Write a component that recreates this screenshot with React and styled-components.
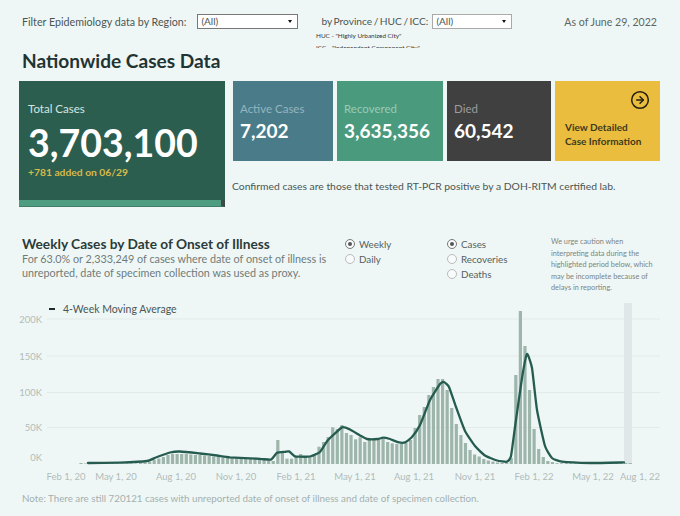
import React from "react";
import styled, { createGlobalStyle } from "styled-components";
import { CircleArrowRight } from "lucide-react";

const GlobalStyle = createGlobalStyle`
  html, body {
    margin: 0;
    background: #eff7f6;
    font-family: Lato, "Noto Sans", sans-serif;
  }
`;

const Page = styled.div`
  width: 680px;
  height: 516px;
  overflow: hidden;
  background: #eff7f6;
  color: #4a5654;
`;

// filters
const FilterBar = styled.div`
  height: 50px;
  padding: 14px 22px 0;
  box-sizing: border-box;
  display: flex;
  align-items: flex-start;
  font-size: 10.7px;
`;
const FilterLabel = styled.span`
  line-height: 15px;
  white-space: nowrap;
  margin-left: ${p => p.offset || 0}px;
  font-size: ${p => (p.tight ? "10.2px" : "inherit")};
  word-spacing: ${p => (p.tight ? "-1.1px" : "0")};
`;
const Select = styled.div`
  width: ${p => p.w}px;
  height: 15px;
  margin-left: ${p => p.gap}px;
  box-sizing: border-box;
  background: #fff;
  border: 1px solid ${p => p.border};
  padding-left: 3px;
  font-size: 10px;
  line-height: 13px;
  display: flex;
  justify-content: space-between;
  &::after {
    content: "";
    align-self: center;
    margin-right: 5px;
    border: 2.5px solid transparent;
    border-top: 3px solid #111;
    border-bottom: 0;
  }
`;
const AsOf = styled.span`
  margin-left: auto;
  margin-right: 1px;
  font-size: 10.6px;
  line-height: 17px;
  color: #5c6664;
`;
const HucNotes = styled.div`
  margin-left: 316px;
  margin-top: -20px;
  height: 18px;
  overflow: hidden;
  font-size: 6.4px;
  line-height: 11.5px;
  color: #333;
`;

const Heading = styled.h1`
  margin: 0 0 0 22px;
  height: 33px;
  font-size: 19.1px;
  line-height: 26px;
  font-weight: 700;
  color: #1f3533;
`;

// KPI cards
const Kpis = styled.div`
  display: grid;
  grid-template-columns: 210px 100px 106px 104px 105px;
  grid-template-rows: 80px auto;
  column-gap: 4px;
  margin-left: 19px;
  height: 126px;
`;
const TotalCard = styled.div`
  grid-row: 1 / 3;
  position: relative;
  background: #2c5e50;
  color: #fff;
  padding: 20px 9px 0;
  width: 206px;
  box-sizing: border-box;
  &::after {
    content: "";
    position: absolute;
    left: 0;
    right: 0;
    bottom: 0;
    height: 6px;
    background: #4f9d80;
    border-right: 4px solid #3c4a46;
    border-bottom: 1px solid #3f8069;
  }
`;
const TotalLabel = styled.div`
  font-size: 11.5px;
  line-height: 16px;
  color: #d5e6e0;
`;
const TotalValue = styled.div`
  font-size: 37.5px;
  line-height: 44px;
  font-weight: 700;
  margin-top: 4px;
`;
const Added = styled.div`
  font-size: 10.3px;
  line-height: 14px;
  font-weight: 700;
  color: #d6b94a;
`;
const Card = styled.div`
  background: ${p => p.bg};
  padding: 20px 7px 0;
  box-sizing: border-box;
`;
const CardLabel = styled.div`
  font-size: 11.5px;
  line-height: 16px;
  color: ${p => p.color};
`;
const CardValue = styled.div`
  font-size: 19px;
  line-height: 22px;
  font-weight: 700;
  margin-top: 3px;
  color: #fff;
`;
const LinkCard = styled.div`
  background: #ebbd3f;
  padding: 9px 10px 0;
  box-sizing: border-box;
  color: #3d3a1c;
  font-size: 10px;
  line-height: 14px;
  font-weight: 700;
  display: flex;
  flex-direction: column;
  svg {
    align-self: flex-end;
    margin-bottom: 10px;
    color: #22210f;
  }
`;
const Caption = styled.div`
  grid-column: 2 / 6;
  padding-top: 18px;
  margin-left: -1px;
  font-size: 10.35px;
  line-height: 14px;
  color: #4a5654;
`;

// weekly section
const Section = styled.div`
  margin-top: 28px;
  height: 65px;
  display: flex;
  padding-left: 22px;
`;
const TitleBlock = styled.div`
  width: 323px;
`;
const SectionTitle = styled.h2`
  margin: 0;
  font-size: 13.7px;
  line-height: 17px;
  font-weight: 700;
  color: #2a3b39;
`;
const SectionText = styled.p`
  margin: 0;
  font-size: 10.8px;
  line-height: 14px;
  color: #6f7b79;
`;
const RadioGroup = styled.div`
  width: ${p => p.w}px;
  display: flex;
  flex-direction: column;
  padding-top: 1px;
`;
const RadioRow = styled.div`
  height: 15px;
  display: flex;
  align-items: center;
  gap: 4px;
  font-size: 9.8px;
  color: #555f5d;
`;
const RadioDot = styled.span`
  width: 8px;
  height: 8px;
  border-radius: 50%;
  background: #f8fbfb;
  border: 1px solid ${p => (p.on ? "#777" : "#bbb")};
  display: grid;
  place-items: center;
  &::after {
    content: "";
    width: 4px;
    height: 4px;
    border-radius: 50%;
    background: ${p => (p.on ? "#555" : "transparent")};
  }
`;
const Caution = styled.div`
  white-space: nowrap;
  font-size: 7.3px;
  line-height: 11.5px;
  color: #7a8482;
  margin-top: 1px;
`;

// chart
const ChartWrap = styled.div`
  position: relative;
  height: 186px;
`;
const ChartSvg = styled.svg`
  display: block;
  width: 680px;
  height: 186px;
  text {
    font-family: Lato, "Noto Sans", sans-serif;
  }
`;
const Legend = styled.div`
  position: absolute;
  left: 49px;
  top: 1.5px;
  display: flex;
  align-items: center;
  gap: 8px;
  font-size: 10.5px;
  line-height: 14px;
  color: #4a5654;
  &::before {
    content: "";
    width: 6px;
    height: 2px;
    background: #1c2a28;
  }
`;
const Note = styled.div`
  padding: 0 0 0 22px;
  margin-top: 5px;
  font-size: 9.77px;
  line-height: 14px;
  color: #a4b0ae;
`;

const TOP = 300;
const BASE = 464;
const BAR_X = 81;
const BAR_STEP = 4.577;

// bar heights in px above the baseline, one per week
const bars = [
  1, 0.5, 0.5, 0.5, 0.5, 0.5, 0.5, 0.5, 0.5, 0.5, 0.5, 0.5, 0.5, 1, 1.5, 2.5, 4, 5.5, 7, 9,
  10, 10, 10, 10, 9.5, 9, 9, 8.5, 8, 7.5, 7, 6.5, 6, 6, 5.5, 5, 5, 5, 5, 4.5,
  4.5, 4.5, 3, 24, 11.7, 5.3, 5.3, 7.3, 10, 8, 6.7, 8, 17.3, 22, 27, 36.7, 35, 39, 31, 29,
  24.7, 26.7, 22, 24.7, 25, 25, 25, 22, 20.7, 20, 20, 21, 24, 36, 49, 57, 69, 77, 85, 85,
  74, 56, 40, 29, 21, 14, 9.5, 7.5, 5, 3.5, 2.5, 1.5, 1, 1, 6, 89, 153, 118, 74, 35,
  15, 7, 3, 2, 0.8, 0.8, 0.8, 0.8, 0.8, 0.8, 0.8, 0.8, 0.8, 0.8, 0.8, 0.8, 0.8, 0.8, 0.8, 1, 1
];

const avgPoints = [
  [88, 463], [120, 462.6], [147, 461], [157, 457], [170, 452.5], [180, 451.5], [200, 453.5], [217, 455.5],
  [230, 457.3], [260, 458.8], [271, 459.6], [277, 452.8], [285, 451.8], [289, 451.4], [295, 456.4], [300, 456.7],
  [310, 456.5], [320, 452], [328, 440], [342, 427.4], [350, 429.5], [360, 435.5], [367, 439],
  [378, 439], [383, 437.6], [390, 439], [398, 442.2], [405, 442.4], [412, 437], [420, 425], [430, 400],
  [440, 384], [444, 382], [449, 387], [456, 407], [465, 431], [475, 446], [485, 455.5], [497, 460.5],
  [507, 461.7], [511, 456], [515, 427], [522, 378], [527, 354], [532, 368], [537, 410], [545, 446],
  [552, 458], [562, 461.7], [590, 463], [624, 462.4]
];

const smoothPath = pts =>
  pts.reduce((d, p, i) => {
    if (i === 0) return `M${p[0]} ${p[1]}`;
    const a = pts[i - 2] || pts[i - 1];
    const b = pts[i - 1];
    const c = pts[i + 1] || p;
    const k = 0.08;
    const c1 = [b[0] + (p[0] - a[0]) * k, b[1] + (p[1] - a[1]) * k];
    const c2 = [p[0] - (c[0] - b[0]) * k, p[1] - (c[1] - b[1]) * k];
    return `${d} C${c1.join(" ")} ${c2.join(" ")} ${p.join(" ")}`;
  }, "");

const yTicks = [
  { label: "200K", y: 319, ty: 322.5 },
  { label: "150K", y: 356, ty: 359.5 },
  { label: "100K", y: 392.5, ty: 396 },
  { label: "50K", y: 427.5, ty: 431 },
  { label: "0K", ty: 460.5 }
];

const xTicks = [
  ["Feb 1, 20", 66], ["May 1, 20", 116], ["Aug 1, 20", 176], ["Nov 1, 20", 236], ["Feb 1, 21", 296],
  ["May 1, 21", 355], ["Aug 1, 21", 414], ["Nov 1, 21", 475], ["Feb 1, 22", 534], ["May 1, 22", 593], ["Aug 1, 22", 640]
];

const Chart = () => (
  <ChartSvg viewBox={`0 ${TOP} 680 186`}>
    {yTicks.filter(t => t.y).map(t => (
      <line key={t.label} x1="47" x2="660" y1={t.y} y2={t.y} stroke="#e3ebea" strokeWidth="1" />
    ))}
    <rect x="624" y="303" width="8" height="161" fill="#e0e7e8" />
    {bars.map((h, i) => (
      <rect key={i} x={BAR_X - 1.6 + i * BAR_STEP} y={BASE - h} width="3.2" height={h} fill="#9db5ab" />
    ))}
    <path
      d={smoothPath(avgPoints)}
      fill="none"
      stroke="#265c50"
      strokeWidth="2.3"
      strokeLinejoin="round"
      strokeLinecap="round"
    />
    {yTicks.map(t => (
      <text key={t.label} x="42" y={t.ty} textAnchor="end" fontSize="9.5" fill="#b1bcba">{t.label}</text>
    ))}
    {xTicks.map(([label, x]) => (
      <text key={label} x={x} y="479.5" textAnchor="middle" fontSize="9.5" fill="#b1bcba">{label}</text>
    ))}
  </ChartSvg>
);

const Radio = ({ on, children }) => (
  <RadioRow>
    <RadioDot on={on} />
    {children}
  </RadioRow>
);

export default function App() {
  return (
    <Page>
      <GlobalStyle />
      <FilterBar>
        <FilterLabel>Filter Epidemiology data by Region:</FilterLabel>
        <Select w={101} gap={11} border="#777">(All)</Select>
        <FilterLabel offset={23} tight>by Province / HUC / ICC:</FilterLabel>
        <Select w={80} gap={4} border="#aaa">(All)</Select>
        <AsOf>As of June 29, 2022</AsOf>
      </FilterBar>
      <HucNotes>
        HUC - "Highly Urbanized City"
        <br />
        ICC - "Independent Component City"
      </HucNotes>
      <Heading>Nationwide Cases Data</Heading>
      <Kpis>
        <TotalCard>
          <TotalLabel>Total Cases</TotalLabel>
          <TotalValue>3,703,100</TotalValue>
          <Added>+781 added on 06/29</Added>
        </TotalCard>
        <Card bg="#4a7b89">
          <CardLabel color="#94b5bf">Active Cases</CardLabel>
          <CardValue>7,202</CardValue>
        </Card>
        <Card bg="#4a9a7e">
          <CardLabel color="#97cbb7">Recovered</CardLabel>
          <CardValue>3,635,356</CardValue>
        </Card>
        <Card bg="#404040">
          <CardLabel color="#9c9c9c">Died</CardLabel>
          <CardValue>60,542</CardValue>
        </Card>
        <LinkCard>
          <CircleArrowRight size={20} strokeWidth={1.8} />
          View Detailed
          <br />
          Case Information
        </LinkCard>
        <Caption>Confirmed cases are those that tested RT-PCR positive by a DOH-RITM certified lab.</Caption>
      </Kpis>
      <Section>
        <TitleBlock>
          <SectionTitle>Weekly Cases by Date of Onset of Illness</SectionTitle>
          <SectionText>
            For 63.0% or 2,333,249 of cases where date of onset of illness is
            <br />
            unreported, date of specimen collection was used as proxy.
          </SectionText>
        </TitleBlock>
        <RadioGroup w={102}>
          <Radio on>Weekly</Radio>
          <Radio>Daily</Radio>
        </RadioGroup>
        <RadioGroup w={104}>
          <Radio on>Cases</Radio>
          <Radio>Recoveries</Radio>
          <Radio>Deaths</Radio>
        </RadioGroup>
        <Caution>
          We urge caution when
          <br />
          interpreting data during the
          <br />
          highlighted period below, which
          <br />
          may be incomplete because of
          <br />
          delays in reporting.
        </Caution>
      </Section>
      <ChartWrap>
        <Chart />
        <Legend>4-Week Moving Average</Legend>
      </ChartWrap>
      <Note>Note: There are still 720121 cases with unreported date of onset of illness and date of specimen collection.</Note>
    </Page>
  );
}
